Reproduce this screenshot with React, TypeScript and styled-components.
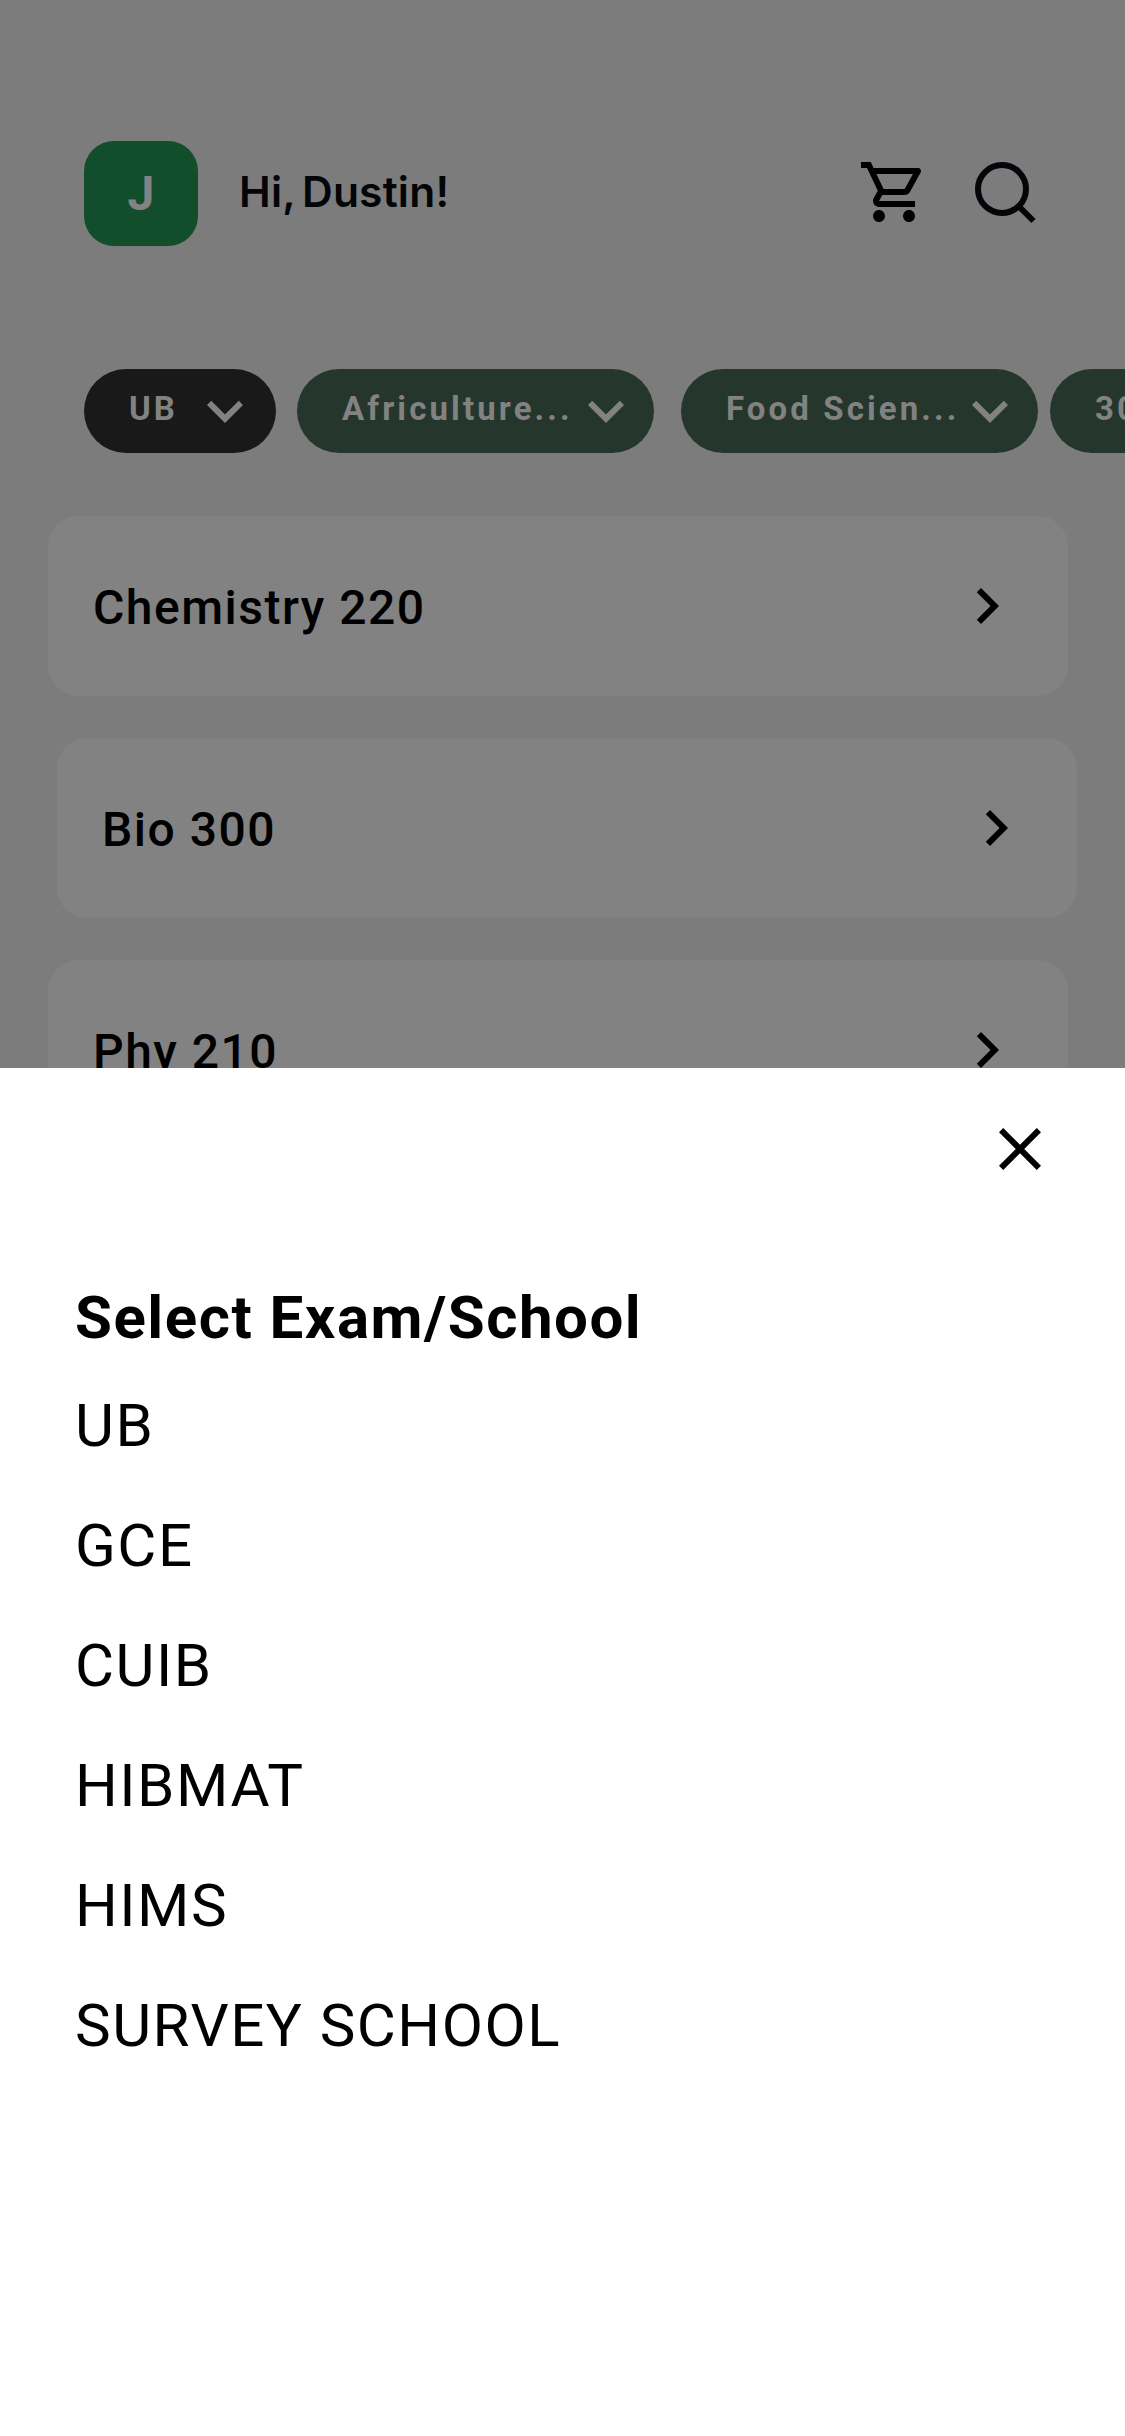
import React from "react";
import styled, { createGlobalStyle } from "styled-components";

const GlobalStyle = createGlobalStyle`
  *, *::before, *::after { box-sizing: border-box; }
  body { margin: 0; background: #7c7c7c; }
  button { border: 0; padding: 0; margin: 0; background: none; font: inherit; color: inherit; }
  h1, h2, p, ul { margin: 0; padding: 0; }
  svg { display: block; flex: none; }
`;

const Screen = styled.div`
  display: flex;
  flex-direction: column;
  width: 1125px;
  height: 2436px;
  overflow: hidden;
  background: #7c7c7c;
  color: #000;
  font-family: Roboto, sans-serif;
`;

const Backdrop = styled.main`
  flex: none;
  height: 1068px;
  overflow: hidden;
`;

const Header = styled.header`
  display: flex;
  align-items: center;
  height: 105px;
  margin-top: 141px;
  padding: 0 87px 0 84px;
`;

const Avatar = styled.div`
  display: flex;
  align-items: center;
  justify-content: center;
  width: 114px;
  height: 105px;
  border-radius: 30px;
  background: #124e2b;
  color: #828282;
  font-size: 48px;
  font-weight: 700;
  line-height: 56px;
`;

const Greeting = styled.h1`
  margin-left: 41px;
  padding-bottom: 3px;
  color: #030509;
  font-family: Inter, sans-serif;
  font-size: 42.5px;
  font-weight: 600;
  line-height: 50px;
  letter-spacing: 0.2px;
  word-spacing: -4px;
  white-space: nowrap;
`;

const Actions = styled.div`
  display: flex;
  gap: 36px;
  margin-left: auto;
  padding-bottom: 3px;
`;

const IconButton = styled.button`
  width: 72px;
  height: 72px;
`;

const Filters = styled.div`
  display: flex;
  margin-top: 123px;
  padding-left: 84px;
`;

const Pill = styled.button<{ $dark?: boolean; $width: number; $gap: number; $inset?: number }>`
  display: flex;
  flex: none;
  align-items: center;
  justify-content: space-between;
  width: ${(p) => p.$width}px;
  height: 84px;
  margin-right: ${(p) => p.$gap}px;
  padding: 0 ${(p) => p.$inset ?? 12}px 0 45px;
  border-radius: 42px;
  background: ${(p) => (p.$dark ? "#191919" : "#25372d")};
  color: #828282;
`;

const PillLabel = styled.span`
  flex: none;
  width: 0;
  padding-bottom: 5px;
  font-size: 33px;
  font-weight: 700;
  line-height: 39px;
  letter-spacing: 3.1px;
  white-space: nowrap;
`;

const Courses = styled.div`
  display: flex;
  flex-direction: column;
  gap: 42px;
  margin-top: 63px;
  padding-left: 48px;
`;

const Course = styled.div<{ $shift?: number }>`
  display: flex;
  flex: none;
  align-items: center;
  justify-content: space-between;
  width: 1020px;
  height: 180px;
  margin-left: ${(p) => p.$shift ?? 0}px;
  padding: 0 45px;
  border-radius: 30px;
  background: #828282;
`;

const CourseName = styled.span`
  padding-top: 4px;
  font-size: 48px;
  font-weight: 500;
  line-height: 56px;
  letter-spacing: 1.5px;
`;

const Sheet = styled.section`
  flex: 1;
  padding: 45px 69px 0 75px;
  background: #fff;
`;

const SheetTop = styled.div`
  display: flex;
  justify-content: flex-end;
`;

const SheetTitle = styled.h2`
  margin-top: 98px;
  font-size: 60px;
  font-weight: 700;
  line-height: 70px;
  letter-spacing: 1.5px;
`;

const Options = styled.ul`
  margin-top: 13px;
  list-style: none;
`;

const Option = styled.li`
  height: 120px;
  padding-top: 25px;
  font-size: 60px;
  font-weight: 400;
  line-height: 70px;
  letter-spacing: 1.5px;
`;

const CartIcon = () => (
  <svg width="72" height="72" viewBox="0 0 24 24" fill="#000">
    <path d="M15.55 13c.75 0 1.41-.41 1.75-1.03l3.58-6.49A.996.996 0 0 0 20.01 4H5.21l-.94-2H1v2h2l3.6 7.59-1.35 2.44C4.52 15.37 5.48 17 7 17h12v-2H7l1.1-2h7.45zM6.16 6h12.15l-2.76 5H8.53L6.16 6zM7 18c-1.1 0-1.99.9-1.99 2S5.9 22 7 22s2-.9 2-2-.9-2-2-2zm10 0c-1.1 0-1.99.9-1.99 2s.89 2 1.99 2 2-.9 2-2-.9-2-2-2z" />
  </svg>
);

const SearchIcon = () => (
  <svg width="72" height="72" viewBox="0 0 72 72" fill="none" stroke="#030509" strokeWidth="6">
    <circle cx="36" cy="33" r="24" />
    <path d="M53 50.5L67.5 65" />
  </svg>
);

const ChevronDown = () => (
  <svg width="72" height="72" viewBox="0 0 24 24" fill="currentColor">
    <path d="M16.59 8.59L12 13.17 7.41 8.59 6 10l6 6 6-6z" />
  </svg>
);

const ChevronRight = () => (
  <svg width="72" height="72" viewBox="0 0 24 24" fill="currentColor">
    <path d="M10 6L8.59 7.41 13.17 12l-4.58 4.59L10 18l6-6z" />
  </svg>
);

const CloseIcon = () => (
  <svg width="72" height="72" viewBox="0 0 24 24" fill="#000">
    <path d="M19 6.41L17.59 5 12 10.59 6.41 5 5 6.41 10.59 12 5 17.59 6.41 19 12 13.41 17.59 19 19 17.59 13.41 12z" />
  </svg>
);

const filters = [
  { label: "UB", width: 192, gap: 21, dark: true, inset: 15 },
  { label: "Africulture...", width: 357, gap: 27 },
  { label: "Food Scien...", width: 357, gap: 12 },
  { label: "300", width: 220, gap: 0 },
];

const courses = [
  { name: "Chemistry 220" },
  { name: "Bio 300", shift: 9 },
  { name: "Phy 210" },
];

const schools = ["UB", "GCE", "CUIB", "HIBMAT", "HIMS", "SURVEY SCHOOL"];

export default function App() {
  return (
    <Screen>
      <GlobalStyle />
      <Backdrop>
        <Header>
          <Avatar>J</Avatar>
          <Greeting>Hi, Dustin!</Greeting>
          <Actions>
            <IconButton aria-label="Cart"><CartIcon /></IconButton>
            <IconButton aria-label="Search"><SearchIcon /></IconButton>
          </Actions>
        </Header>
        <Filters>
          {filters.map((f) => (
            <Pill key={f.label} $dark={f.dark} $width={f.width} $gap={f.gap} $inset={f.inset}>
              <PillLabel>{f.label}</PillLabel>
              <ChevronDown />
            </Pill>
          ))}
        </Filters>
        <Courses>
          {courses.map((c) => (
            <Course key={c.name} $shift={c.shift}>
              <CourseName>{c.name}</CourseName>
              <ChevronRight />
            </Course>
          ))}
        </Courses>
      </Backdrop>
      <Sheet>
        <SheetTop>
          <IconButton aria-label="Close"><CloseIcon /></IconButton>
        </SheetTop>
        <SheetTitle>Select Exam/School</SheetTitle>
        <Options>
          {schools.map((s) => (
            <Option key={s}>{s}</Option>
          ))}
        </Options>
      </Sheet>
    </Screen>
  );
}
